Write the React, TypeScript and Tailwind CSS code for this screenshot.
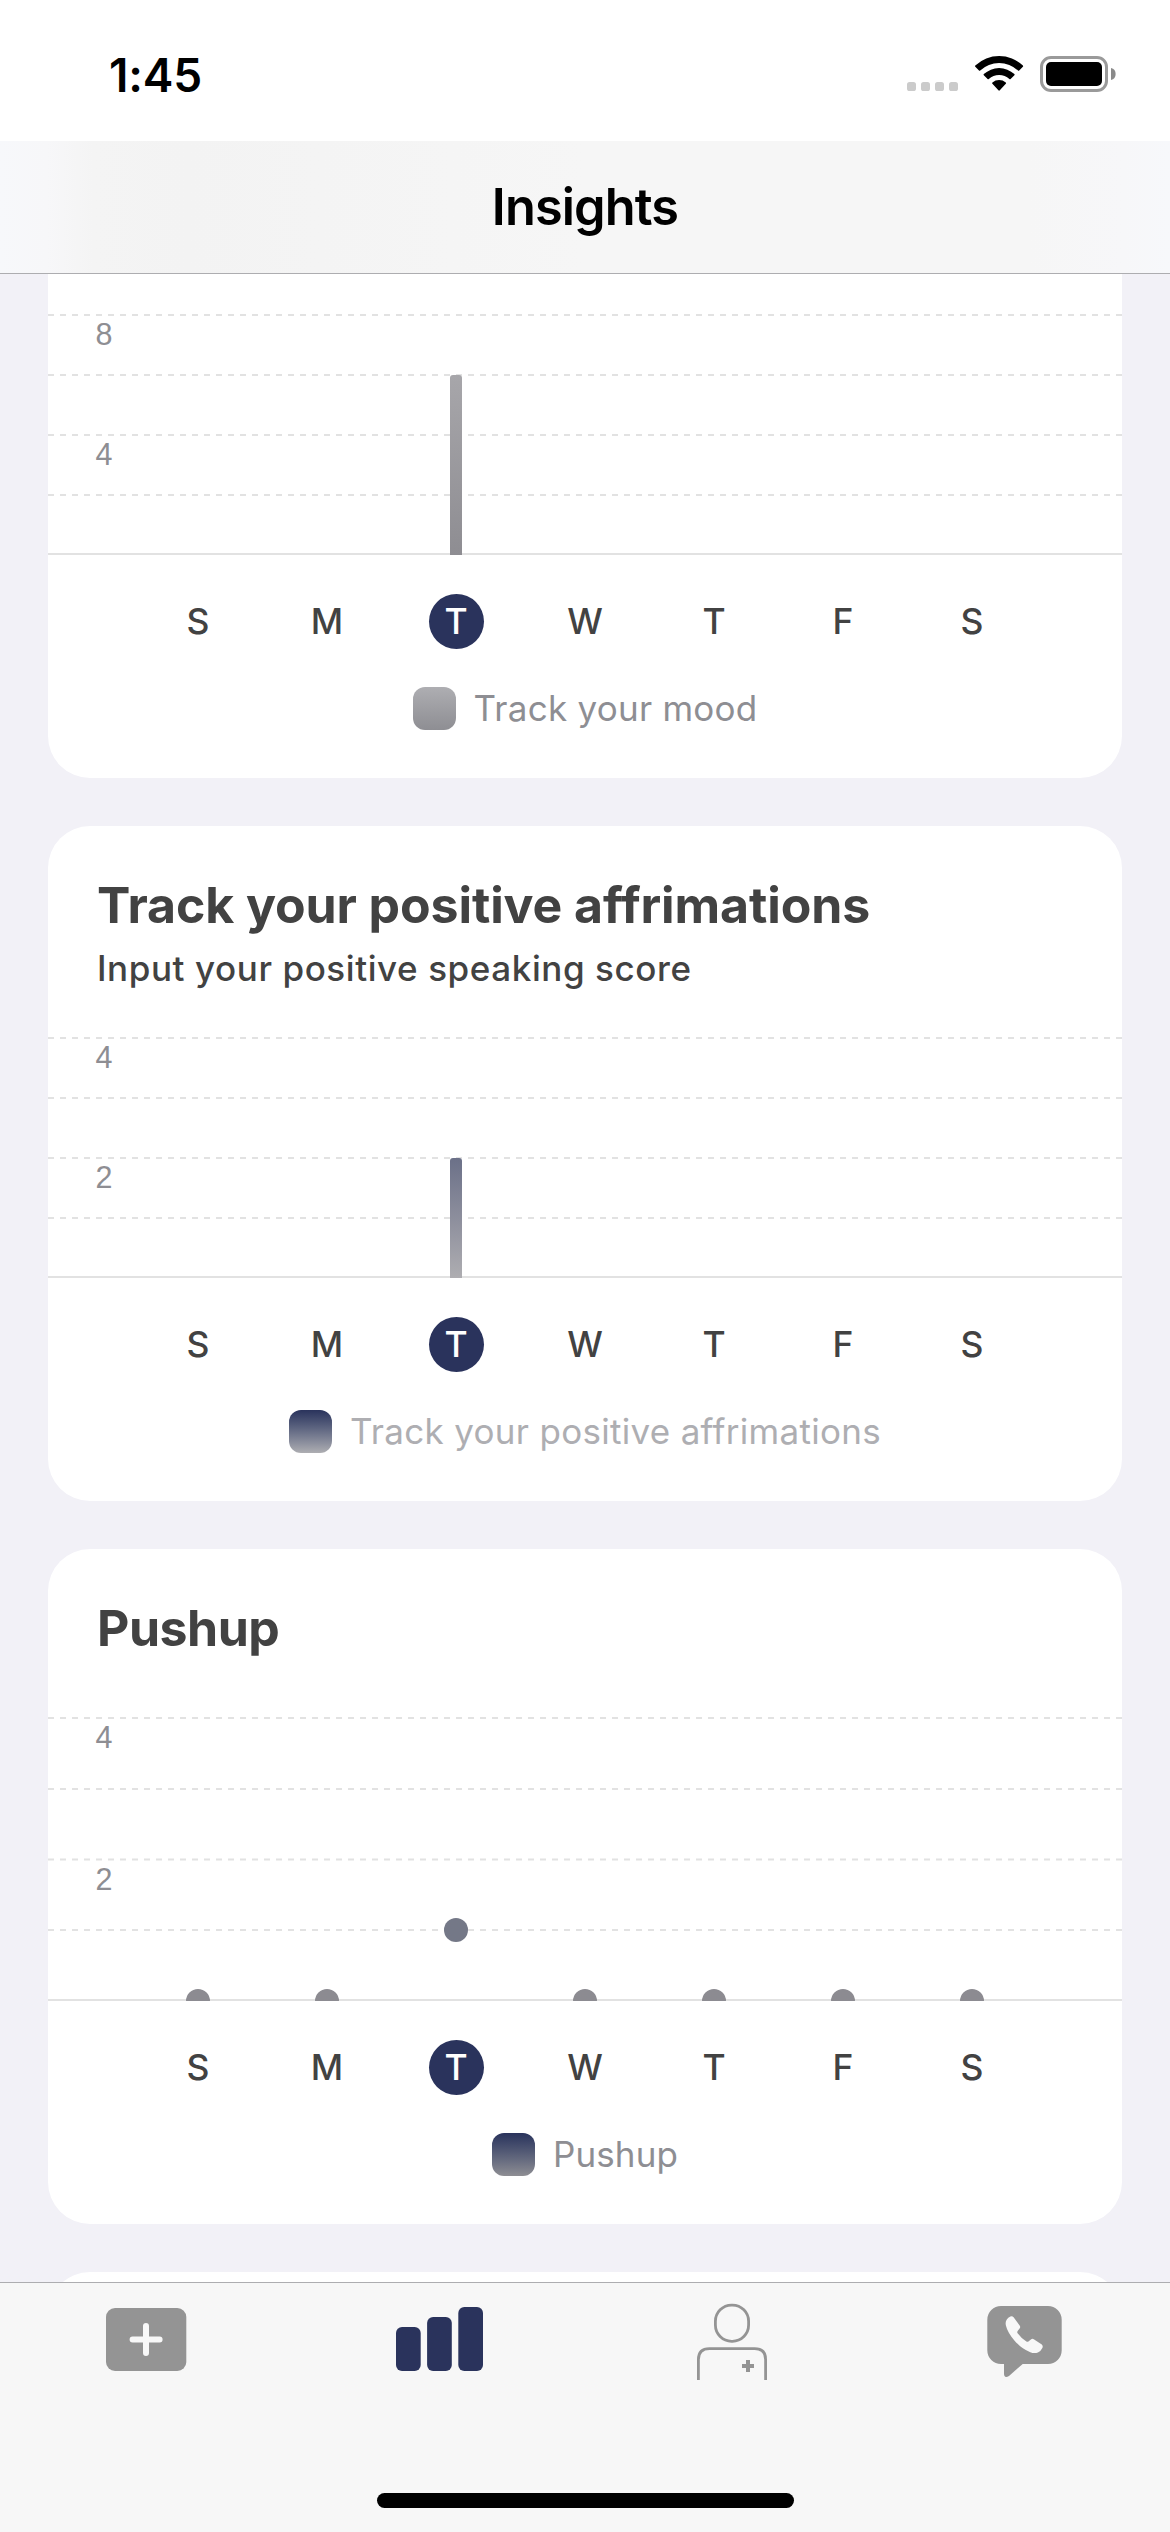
import React from "react";

const DAYS = ["S", "M", "T", "W", "T", "F", "S"];
const TODAY = 2;
const FIRST_X = 150;
const STEP_X = 129;

type Line = { y: number; label?: string };
type ChartCard = {
  id: string;
  title?: string;
  titleClass?: string;
  subtitle?: string;
  legend: string;
  legendClass: string;
  swatchClass: string;
  lines: Line[];
  colors: [string, string];
  barTop?: number;
  dots?: number[];
};

const BAR_LINES = [0, 60, 120, 180];
const barLines = (a: string, b: string): Line[] =>
  BAR_LINES.map((y, i) => ({ y, label: i === 0 ? a : i === 2 ? b : undefined }));

const CARDS: ChartCard[] = [
  {
    id: "mood",
    legend: "Track your mood",
    legendClass: "text-[#8e8e93] tracking-[0.25px]",
    swatchClass: "bg-linear-to-b from-[#aeaeb2] to-[#8e8e93]",
    lines: barLines("8", "4"),
    colors: ["#a7a6aa", "#8e8d92"],
    barTop: 60,
  },
  {
    id: "affirm",
    title: "Track your positive affrimations",
    titleClass: "tracking-[-0.1px]",
    subtitle: "Input your positive speaking score",
    legend: "Track your positive affrimations",
    legendClass: "text-[#aeaeb2] tracking-[0.3px]",
    swatchClass: "bg-linear-to-b from-[#2a335c] to-[#aeaeb2]",
    lines: barLines("4", "2"),
    colors: ["#6b7088", "#aeadb1"],
    barTop: 120,
  },
  {
    id: "pushup",
    title: "Pushup",
    titleClass: "tracking-[-0.5px]",
    legend: "Pushup",
    legendClass: "text-[#8e8e93] tracking-[0.1px]",
    swatchClass: "bg-linear-to-b from-[#2a335c] to-[#8e8e93]",
    lines: [{ y: -43, label: "4" }, { y: 28 }, { y: 98.6, label: "2" }, { y: 169 }],
    colors: ["#747887", "#8c8b91"],
    dots: [240, 240, 169, 240, 240, 240, 240],
  },
];

/* Plot area: y=0 is the top grid line of the bar charts, y=240 the lower edge of the axis. */
function Plot({ card }: { card: ChartCard }) {
  const barX = FIRST_X + STEP_X * TODAY;
  return (
    <svg className="block h-[290px] w-full shrink-0" viewBox="0 -50 1074 290">
      <defs>
        <linearGradient id={`${card.id}-fill`} x1="0" y1="0" x2="0" y2="1">
          <stop offset="0" stopColor={card.colors[0]} />
          <stop offset="1" stopColor={card.colors[1]} />
        </linearGradient>
      </defs>
      {card.lines.map((l) => (
        <g key={l.y}>
          <line x1="0" x2="1074" y1={l.y} y2={l.y} stroke="#e2e2e2" strokeWidth="2" strokeDasharray="6 6" />
          {l.label && (
            <text x="47.5" y={l.y + 30} fontFamily="'Liberation Sans', sans-serif" fontSize="30.5" fill="#8e8e93">
              {l.label}
            </text>
          )}
        </g>
      ))}
      <line x1="0" x2="1074" y1="239" y2="239" stroke="#e2e2e2" strokeWidth="2" />
      {card.barTop !== undefined && (
        <path
          d={`M${barX - 6} 240V${card.barTop + 3}q0-3 3-3h6q3 0 3 3V240z`}
          fill={`url(#${card.id}-fill)`}
        />
      )}
      {card.dots?.map((y, i) => (
        <circle
          key={i}
          cx={FIRST_X + STEP_X * i}
          cy={y}
          r="12"
          fill={i === TODAY ? card.colors[0] : card.colors[1]}
        />
      ))}
    </svg>
  );
}

function Card({ card }: { card: ChartCard }) {
  return (
    <section className="flex h-[675px] shrink-0 flex-col overflow-hidden rounded-[42px] bg-white">
      <header className="flex h-[162px] shrink-0 flex-col pt-[49px] pl-[49px] whitespace-nowrap text-[#424242]">
        {card.title && (
          <h2 className={`text-[50px] leading-[60px] font-bold ${card.titleClass}`}>{card.title}</h2>
        )}
        {card.subtitle && (
          <p className="mt-[11px] text-[35px] leading-[44px] font-medium tracking-[0.58px]">{card.subtitle}</p>
        )}
      </header>
      <Plot card={card} />
      <div className="mt-[39px] flex h-[55px] shrink-0 pl-[85.5px]">
        {DAYS.map((d, i) => (
          <div key={i} className="flex w-[129px] items-center justify-center text-[35.5px] font-medium">
            {i === TODAY ? (
              <span className="flex size-[55px] items-center justify-center rounded-full bg-[#2a335c] text-white">{d}</span>
            ) : (
              <span className="text-[#424242]">{d}</span>
            )}
          </div>
        ))}
      </div>
      <div className="mt-[38px] flex h-[43px] shrink-0 items-center justify-center gap-[18px]">
        <span className={`size-[43px] rounded-[12px] ${card.swatchClass}`} />
        <span className={`text-[35px] whitespace-nowrap ${card.legendClass}`}>{card.legend}</span>
      </div>
    </section>
  );
}

function StatusBar() {
  return (
    <div className="flex h-[141px] shrink-0 items-start justify-between bg-white pr-[54px] pl-[109px]">
      <span className="mt-[47px] text-[46px] leading-[56px] font-semibold tracking-[-0.2px]">1:45</span>
      <svg className="mt-[50px] block h-[46px] w-[210px]" viewBox="906 50 210 46">
        {[907, 921, 935, 949].map((x) => (
          <rect key={x} x={x} y="82" width="9" height="9" rx="2.6" fill="#cbcbcb" />
        ))}
        <path d="M975.3 65.6a34.5 34.5 0 0 1 47.6 0 .9.9 0 0 1 0 1.2l-3.7 3.7a.9.9 0 0 1-1.2 0 27.5 27.5 0 0 0-37.8 0 .9.9 0 0 1-1.2 0l-3.7-3.7a.9.9 0 0 1 0-1.2z" />
        <path d="M983.8 74.1a22.5 22.5 0 0 1 30.6 0 .9.9 0 0 1 0 1.2l-3.8 3.7a.9.9 0 0 1-1.2 0 15.5 15.5 0 0 0-20.6 0 .9.9 0 0 1-1.2 0l-3.8-3.7a.9.9 0 0 1 0-1.2z" />
        <path d="M992.4 82.4a10.6 10.6 0 0 1 13.4 0 .9.9 0 0 1 0 1.3l-6 6.6a.9.9 0 0 1-1.4 0l-6-6.6a.9.9 0 0 1 0-1.3z" />
        <rect x="1041.5" y="57.5" width="65" height="33" rx="9.5" fill="none" stroke="#9a9a9a" strokeWidth="3" />
        <rect x="1046" y="62" width="56" height="24" rx="5" />
        <path d="M1111 68a6.2 6.2 0 0 1 0 12z" fill="#8a8a8a" />
      </svg>
    </div>
  );
}

function TabBar() {
  return (
    <nav className="flex h-[250px] shrink-0 flex-col items-center border-t border-[#adadb0] bg-[#f7f7f7]">
      <div className="grid h-[210px] w-full grid-cols-4">
        <svg className="mt-[17px] ml-[96px] block h-[84px] w-[100px]" viewBox="96 2300 100 84">
          <rect x="106" y="2308" width="80.3" height="63" rx="9" fill="#949494" />
          <path d="M146 2326v27M132.6 2339.5h27" stroke="#f8f8f8" strokeWidth="6" strokeLinecap="round" />
        </svg>
        <svg className="mt-[17px] ml-[93.5px] block h-[84px] w-[108px]" viewBox="386 2300 108 84" fill="#2a335c">
          <rect x="396" y="2327" width="24.7" height="44" rx="6" />
          <rect x="427.1" y="2317" width="24.7" height="54" rx="6" />
          <rect x="458.3" y="2307" width="24.7" height="64" rx="6" />
        </svg>
        <svg className="mt-[17px] ml-[102px] block h-[84px] w-[90px]" viewBox="687 2300 90 84" fill="none" stroke="#949494" strokeWidth="2.8">
          <rect x="715.4" y="2305.1" width="33.2" height="36.2" rx="16.2" />
          <path d="M698.4 2380v-20.4q0-11 11-11h45.2q11 0 11 11V2380" />
          <path d="M748 2360v12M742 2366h12" strokeWidth="4" />
        </svg>
        <svg className="mt-[17px] ml-[99.5px] block h-[84px] w-[95px]" viewBox="977 2300 95 84">
          <path
            d="M1001 2306h47a13.7 13.7 0 0 1 13.7 13.7v30.6a13.7 13.7 0 0 1-13.7 13.7h-25.3l-13.7 12q-5 2.6-5-2.5v-9.5h-3a13.7 13.7 0 0 1-13.7-13.7v-30.6a13.7 13.7 0 0 1 13.7-13.7z"
            fill="#949494"
          />
          <path
            d="M1010.4 2316.4q1.8-.8 3.2.8l6.2 8.6q.9 1.5-.2 2.8l-1.8 2.2q-1 1.2-.2 2.4 4 5.400 8.800 8.300 1.200.8 2.300-.2l2.200-1.900q1.300-1.200 2.900-.2l8 5.400q1.400 1.200.7 3.200-1.500 3.400-4.600 4.600-3.400 1.400-7.600-.2-8.300-3-15.500-11.200-7.300-8.300-8.900-15.400-1.400-6.300 4.500-9.200z"
            fill="#f8f8f8"
          />
        </svg>
      </div>
      <div className="h-[15px] w-[417px] rounded-full bg-black" />
    </nav>
  );
}

export default function App() {
  return (
    <div className="flex h-[2532px] w-[1170px] flex-col overflow-hidden bg-[#f2f1f7] font-[Inter,sans-serif] text-black">
      <StatusBar />
      <header className="flex h-[133px] shrink-0 items-center justify-center border-b border-[#adadb0] bg-[linear-gradient(90deg,#f7f8fb_0%,#f7f7f9_4%,#f4f4f4_8%,#f3f3f3_16%,#f6f6f6_50%,#f6f6f6_88%,#f7f7f9_96%,#f7f8fb_100%)]">
        <h1 className="text-[50.5px] leading-[60px] font-semibold tracking-[-0.9px]">Insights</h1>
      </header>
      <main className="flex h-[2008px] shrink-0 flex-col justify-end gap-[48px] overflow-hidden px-[48px]">
        {CARDS.map((c) => (
          <Card key={c.id} card={c} />
        ))}
        <div className="h-[10px] shrink-0 overflow-hidden">
          <div className="h-[675px] rounded-[42px] bg-white" />
        </div>
      </main>
      <TabBar />
    </div>
  );
}
